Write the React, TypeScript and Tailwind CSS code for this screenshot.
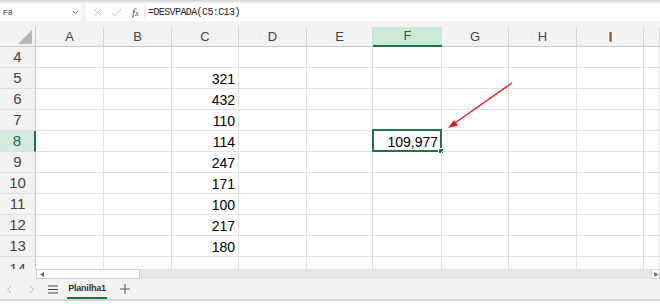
import React from 'react';

const cols = [
  { l: 'A', w: 'w-[68px]' },
  { l: 'B', w: 'w-[68px]' },
  { l: 'C', w: 'w-[67px]' },
  { l: 'D', w: 'w-[68px]' },
  { l: 'E', w: 'w-[66px]' },
  { l: 'F', w: 'w-[69px]' },
  { l: 'G', w: 'w-[67px]' },
  { l: 'H', w: 'w-[68px]' },
  { l: 'I', w: 'w-[67px]' },
  { l: '', w: 'w-[16px]' },
];

const values: Record<number, string> = {
  5: '321',
  6: '432',
  7: '110',
  8: '114',
  9: '247',
  10: '171',
  11: '100',
  12: '217',
  13: '180',
};

const rows = [4, 5, 6, 7, 8, 9, 10, 11, 12, 13];

const Row = ({ n }: { n: number }) => {
  const sel = n === 8;
  return (
    <div className="flex h-[21px]">
      <div
        className={
          sel
            ? 'flex w-[36px] items-center justify-center border-r-2 border-b border-r-[#217346] border-b-[#e1e1e1] bg-[#d3ecdd] text-[15px] text-[#1d6b40]'
            : 'flex w-[36px] items-center justify-center border-r border-b border-r-[#c9c9c9] border-b-[#e1e1e1] bg-[#f3f3f3] text-[15px] text-[#444]'
        }
      >
        {n}
      </div>
      {cols.map((c, i) => (
        <div
          key={c.l + i}
          className={`relative flex ${c.w} items-end justify-end border-r border-b border-[#e1e1e1] pr-[3px] text-[14px] leading-[17px] text-black`}
        >
          {i === 2 && values[n]}
          {i === 5 && sel && (
            <>
              <span>109,977</span>
              <div className="absolute -top-[2px] -right-[1px] -bottom-[1px] -left-[1px] border-2 border-[#217346]">
                <div className="absolute -right-[4px] -bottom-[4px] h-[6px] w-[6px] border border-white bg-[#217346]" />
              </div>
            </>
          )}
        </div>
      ))}
    </div>
  );
};

export default function App() {
  return (
    <div className="relative h-[304px] w-[660px] overflow-hidden bg-white font-['Liberation_Sans',Arial,sans-serif]">
      {/* formula bar */}
      <div className="h-[27px] border-t-2 border-[#dcdcdc] bg-[#f3f3f3] pt-[2px]">
        <div className="flex h-[17px]">
          <div className="flex w-[81px] items-center justify-between bg-white pr-[2px] pl-[3px]">
            <span className="text-[8px] text-[#333]">F8</span>
            <svg width="7" height="5" viewBox="0 0 7 5">
              <path d="M1 1l2.5 2.5L6 1" fill="none" stroke="#777" strokeWidth="1" />
            </svg>
          </div>
          <div className="ml-[5px] flex w-[58px] items-center bg-white pl-[7px]">
            <svg width="9" height="9" viewBox="0 0 9 9">
              <path d="M1 1l7 7M8 1L1 8" stroke="#c4c4c4" strokeWidth="1" />
            </svg>
            <svg className="ml-[9px]" width="11" height="9" viewBox="0 0 11 9">
              <path d="M1 5l3 3 6-7" fill="none" stroke="#c4c4c4" strokeWidth="1" />
            </svg>
            <span className="ml-[10px] font-['Liberation_Serif',serif] text-[11px] text-[#444] italic">
              f<span className="text-[8px]">x</span>
            </span>
          </div>
          <div className="ml-[2px] flex flex-1 items-center bg-white pl-[2px] font-['Liberation_Mono',monospace] text-[10px] tracking-[-0.6px] text-[#222]">
            =DESVPADA(C5:C13)
          </div>
        </div>
      </div>

      {/* column headers */}
      <div className="flex h-[20px] bg-[#f3f3f3]">
        <div className="relative w-[36px] border-r border-b border-[#c9c9c9]">
          <svg className="absolute top-[3px] left-[18px]" width="14" height="14" viewBox="0 0 14 14">
            <path d="M14 0V14H0Z" fill="#b8b8b8" />
          </svg>
        </div>
        {cols.map((c, i) =>
          c.l === 'F' ? (
            <div
              key={c.l + i}
              className={`flex ${c.w} items-center justify-center border-b-2 border-[#217346] bg-[#caead6] text-[13px] text-[#1d6b40]`}
            >
              {c.l}
            </div>
          ) : (
            <div
              key={c.l + i}
              className={`flex ${c.w} items-center justify-center border-r border-b border-r-[#d6d6d6] border-b-[#c9c9c9] text-[13px] text-[#444]`}
            >
              {c.l}
            </div>
          ),
        )}
      </div>

      {rows.map((n) => (
        <Row key={n} n={n} />
      ))}

      {/* partial row 14 */}
      <div className="flex h-[12px] overflow-hidden">
        <div className="flex w-[36px] justify-center border-r border-[#c9c9c9] bg-[#f3f3f3] pt-[3px] text-[15px] leading-[17px] text-[#444]">
          14
        </div>
        {cols.map((c, i) => (
          <div key={c.l + i} className={`${c.w} border-r border-[#e1e1e1]`} />
        ))}
      </div>

      {/* horizontal scrollbar */}
      <div className="flex h-[10px]">
        <div className="w-[36px] bg-[#f3f3f3]" />
        <div className="flex flex-1 bg-[#e6e6e6]">
          <div className="flex w-[104px] items-center border border-[#d0d0d0] bg-white pl-[3px]">
            <svg width="5" height="5" viewBox="0 0 5 5">
              <path d="M4 0v5L0 2.5Z" fill="#666" />
            </svg>
          </div>
          <div className="flex-1" />
          <div className="flex w-[9px] items-center border border-[#d0d0d0] bg-white pl-[2px]">
            <svg width="6" height="5" viewBox="0 0 6 5">
              <path d="M0 0h1v5H0zM1 0l5 2.5L1 5Z" fill="#777" />
            </svg>
          </div>
        </div>
      </div>

      {/* sheet tabs */}
      <div className="flex h-[22px] items-center border-b-2 border-[#d6d6d6] bg-[#f3f3f3]">
        <svg className="ml-[6px]" width="6" height="9" viewBox="0 0 6 9">
          <path d="M5 1L1.5 4.5 5 8" fill="none" stroke="#c0c0c0" strokeWidth="1" />
        </svg>
        <svg className="ml-[17px]" width="6" height="9" viewBox="0 0 6 9">
          <path d="M1 1l3.5 3.5L1 8" fill="none" stroke="#c0c0c0" strokeWidth="1" />
        </svg>
        <svg className="ml-[13px]" width="10" height="9" viewBox="0 0 10 9">
          <path d="M0 1h10M0 4.5h10M0 8h10" stroke="#444" strokeWidth="1" />
        </svg>
        <div className="relative ml-[9px] flex h-full w-[40px] items-center justify-center text-[9px] font-bold tracking-[-0.2px] text-[#333]">
          Planilha1
          <div className="absolute right-0 bottom-0 left-0 h-[2px] bg-[#217346]" />
        </div>
        <svg className="ml-[13px]" width="10" height="10" viewBox="0 0 10 10">
          <path d="M5 0v10M0 5h10" stroke="#555" strokeWidth="1" />
        </svg>
      </div>

      {/* mouse text cursor in I header */}
      <div className="absolute top-[32px] left-[610px] h-[10px] w-[2px] border-r border-[#5ea0d8] bg-[#8a5a2a]" />

      {/* red arrow annotation */}
      <svg className="absolute top-0 left-0" width="660" height="304" viewBox="0 0 660 304">
        <path d="M512 83L452 125" stroke="#e8191d" strokeWidth="1.3" />
        <path d="M448 128l10-2.5-4-5.5Z" fill="#e8191d" />
      </svg>
    </div>
  );
}
